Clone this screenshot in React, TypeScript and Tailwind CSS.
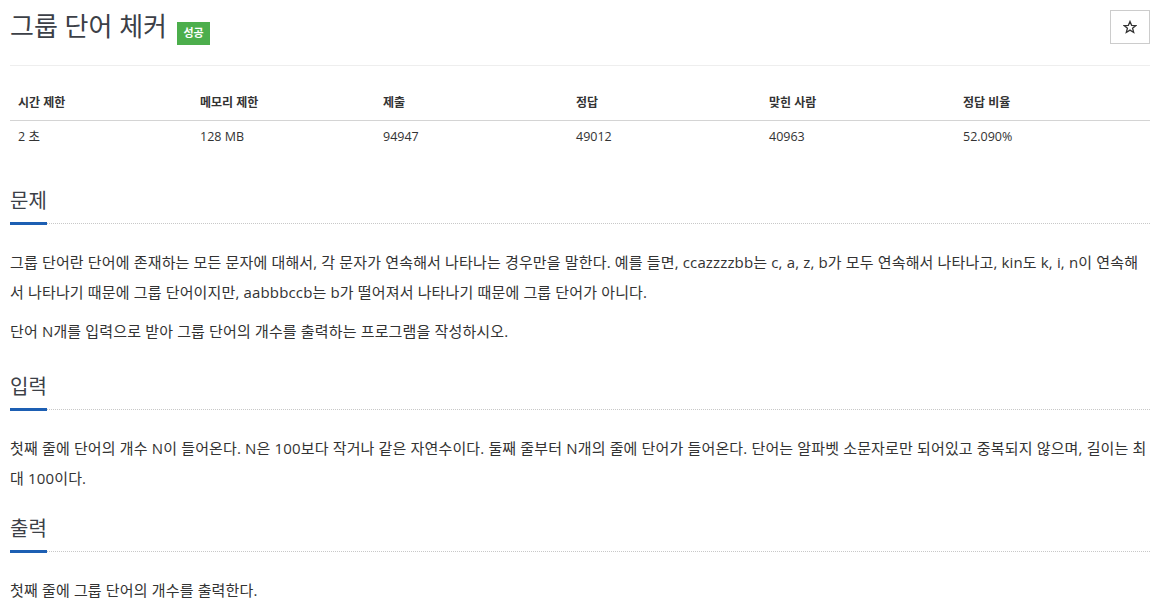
import React from "react";

const FONT = "font-['Open_Sans','Noto_Sans_CJK_KR',sans-serif]";

function SectionTitle({ children }: { children: React.ReactNode }) {
  return (
    <div className="border-b border-dotted border-[#c8c8c8]">
      <h2 className="inline-block -mb-[2px] border-b-[3px] border-[#1d5fb3] pb-[9px] text-[20px] leading-[24px] font-normal text-[#3c4047]">
        {children}
      </h2>
    </div>
  );
}

const stats = [
  { label: "시간 제한", value: "2 초", w: "w-[182px]" },
  { label: "메모리 제한", value: "128 MB", w: "w-[183px]" },
  { label: "제출", value: "94947", w: "w-[193px]" },
  { label: "정답", value: "49012", w: "w-[193px]" },
  { label: "맞힌 사람", value: "40963", w: "w-[194px]" },
  { label: "정답 비율", value: "52.090%", w: "" },
];

export default function App() {
  return (
    <div className={`${FONT} bg-white text-[#333] min-h-[612px] px-[10px]`}>
      <div className="w-[1140px]">
        {/* Header */}
        <div className="flex items-start justify-between pt-[10px]">
          <div className="flex items-start gap-[10px]">
            <h1 className="text-[26px] leading-[32px] font-normal text-[#3c4047]">그룹 단어 체커</h1>
            <span className="mt-[12px] flex h-[23px] w-[33px] items-center justify-center bg-[#4cae4c] text-[11px] font-bold text-white">
              성공
            </span>
          </div>
          <button className="flex h-[34px] w-[40px] items-center justify-center border border-[#ccc] bg-white">
            <svg width="14" height="14" viewBox="0 0 24 24" fill="none" stroke="#333" strokeWidth="2.2" strokeLinejoin="miter">
              <polygon points="12,2.5 14.8,9.2 22,9.5 16.4,14.2 18.3,21.3 12,17.3 5.7,21.3 7.6,14.2 2,9.5 9.2,9.2" />
            </svg>
          </button>
        </div>
        <div className="mt-[20px] border-t border-[#eee]" />

        {/* Stats table */}
        <table className="mt-[20px] w-full border-collapse text-[12px]">
          <thead>
            <tr className="border-b border-[#d4d4d4]">
              {stats.map((s) => (
                <th key={s.label} className={`${s.w} px-[8px] h-[34px] text-left font-bold`}>
                  {s.label}
                </th>
              ))}
            </tr>
          </thead>
          <tbody>
            <tr>
              {stats.map((s) => (
                <td key={s.label} className="px-[8px] h-[35px] text-left text-[12.5px]">
                  {s.value}
                </td>
              ))}
            </tr>
          </tbody>
        </table>

        {/* 문제 */}
        <section className="mt-[34px]">
          <SectionTitle>문제</SectionTitle>
          <div className="mt-[23px] text-[15px] leading-[30px] tracking-[0.15px]">
            <p className="mb-[9px]">
              그룹 단어란 단어에 존재하는 모든 문자에 대해서, 각 문자가 연속해서 나타나는 경우만을 말한다. 예를 들면, ccazzzzbb는 c, a, z, b가 모두 연속해서 나타나고, kin도 k, i, n이 연속해서 나타나기 때문에 그룹 단어이지만, aabbbccb는 b가 떨어져서 나타나기 때문에 그룹 단어가 아니다.
            </p>
            <p className="mb-[9px]">단어 N개를 입력으로 받아 그룹 단어의 개수를 출력하는 프로그램을 작성하시오.</p>
          </div>
        </section>

        {/* 입력 */}
        <section className="mt-[29px]">
          <SectionTitle>입력</SectionTitle>
          <div className="mt-[23px] text-[15px] leading-[30px] tracking-[0.15px]">
            <p className="mb-[9px]">
              첫째 줄에 단어의 개수 N이 들어온다. N은 100보다 작거나 같은 자연수이다. 둘째 줄부터 N개의 줄에 단어가 들어온다. 단어는 알파벳 소문자로만 되어있고 중복되지 않으며, 길이는 최대 100이다.
            </p>
          </div>
        </section>

        {/* 출력 */}
        <section className="mt-[24px]">
          <SectionTitle>출력</SectionTitle>
          <div className="mt-[23px] text-[15px] leading-[30px] tracking-[0.15px]">
            <p className="mb-[9px]">첫째 줄에 그룹 단어의 개수를 출력한다.</p>
          </div>
        </section>
      </div>
    </div>
  );
}
